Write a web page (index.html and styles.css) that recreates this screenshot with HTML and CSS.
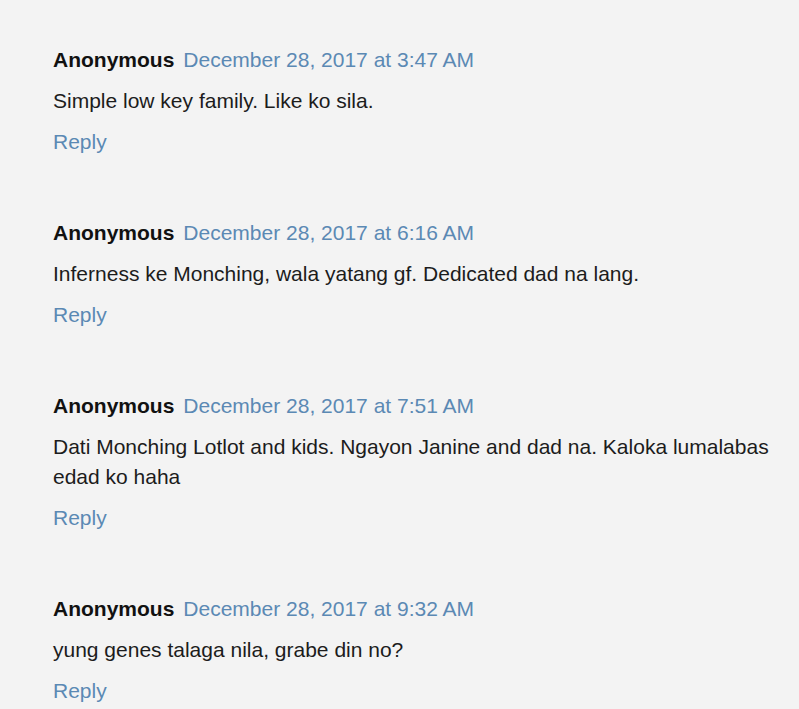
FILE: index.html
```html
<!DOCTYPE html>
<html lang="en">
<head>
    <meta charset="UTF-8">
    <meta name="viewport" content="width=device-width, initial-scale=1.0">
    <title>Comments</title>
    <link rel="stylesheet" href="styles.css">
</head>
<body>
    <div class="comments">
        <div class="comment">
            <div class="comment-header">
                <span class="author">Anonymous</span>
                <a class="date" href="#">December 28, 2017 at 3:47 AM</a>
            </div>
            <p class="comment-body">Simple low key family. Like ko sila.</p>
            <a class="reply" href="#">Reply</a>
        </div>

        <div class="comment">
            <div class="comment-header">
                <span class="author">Anonymous</span>
                <a class="date" href="#">December 28, 2017 at 6:16 AM</a>
            </div>
            <p class="comment-body">Inferness ke Monching, wala yatang gf. Dedicated dad na lang.</p>
            <a class="reply" href="#">Reply</a>
        </div>

        <div class="comment">
            <div class="comment-header">
                <span class="author">Anonymous</span>
                <a class="date" href="#">December 28, 2017 at 7:51 AM</a>
            </div>
            <p class="comment-body">Dati Monching Lotlot and kids. Ngayon Janine and dad na. Kaloka lumalabas edad ko haha</p>
            <a class="reply" href="#">Reply</a>
        </div>

        <div class="comment">
            <div class="comment-header">
                <span class="author">Anonymous</span>
                <a class="date" href="#">December 28, 2017 at 9:32 AM</a>
            </div>
            <p class="comment-body">yung genes talaga nila, grabe din no?</p>
            <a class="reply" href="#">Reply</a>
        </div>
    </div>
</body>
</html>
```

FILE: styles.css
```css
body {
    margin: 0;
    background-color: #f3f3f3;
    font-family: "Liberation Sans", Arial, sans-serif;
    font-size: 21px;
    line-height: 30px;
    color: #1c1c1c;
}

.comments {
    display: flex;
    flex-direction: column;
    gap: 61px;
    padding: 45px 14px 0 53px;
}

.comment {
    display: flex;
    flex-direction: column;
    gap: 11px;
}

.comment-header {
    display: flex;
    gap: 9px;
}

.author {
    font-weight: bold;
    color: #111;
}

.date,
.reply {
    color: #5b89b4;
    text-decoration: none;
}

.comment-body {
    margin: 0;
}

.reply {
    align-self: flex-start;
}
```
